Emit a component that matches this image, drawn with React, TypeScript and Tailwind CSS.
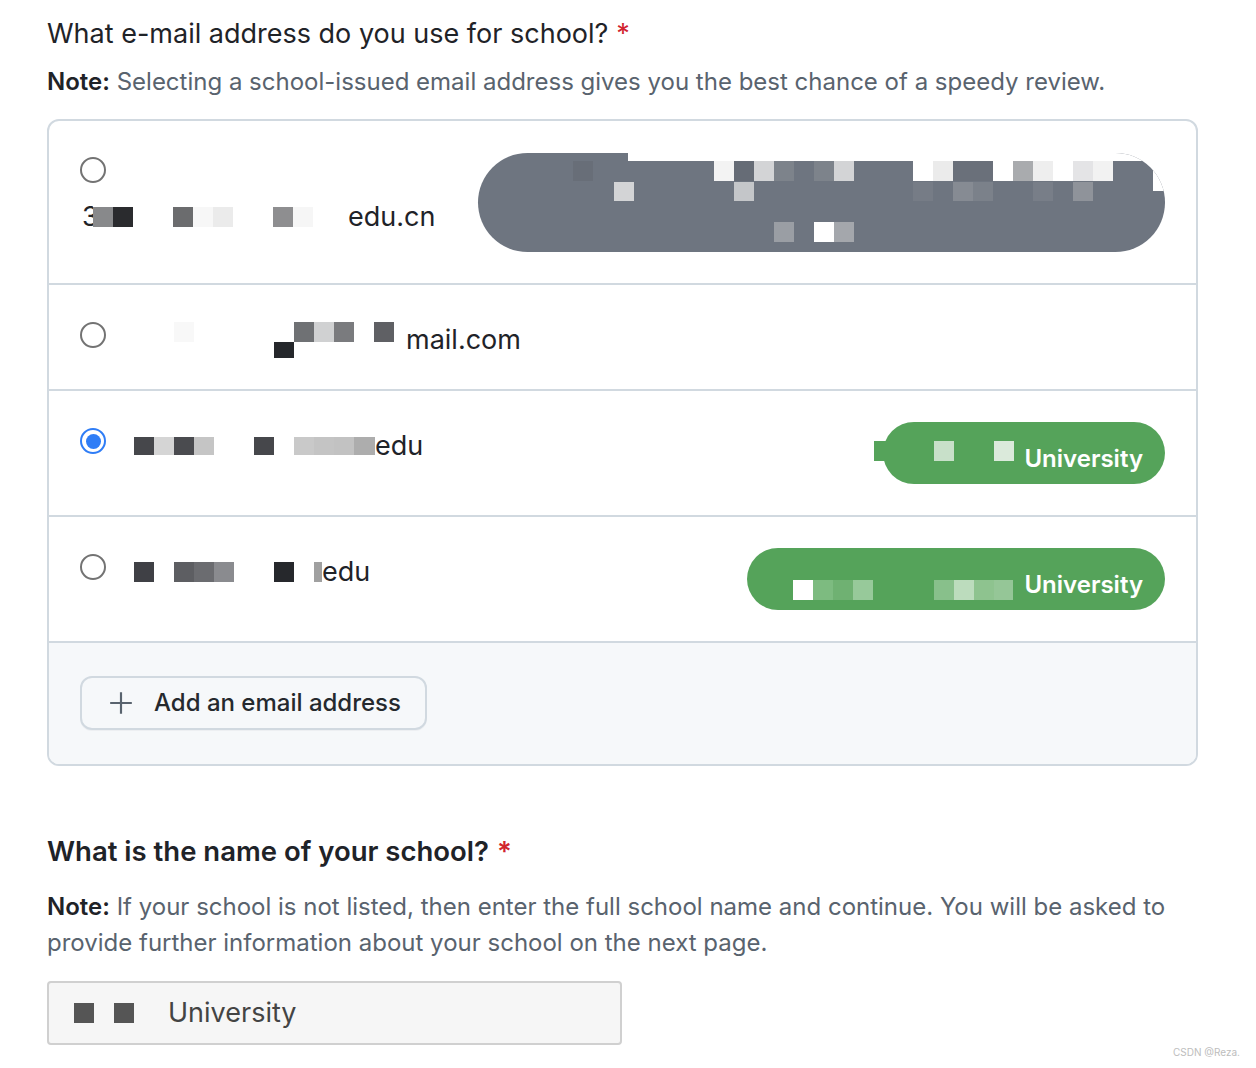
import React from 'react';

type Block = [number, number, number, number, string];

// Pixelated cover over private parts of an address
function Mosaic({ width, height, blocks, className }: { width: number; height: number; blocks: Block[]; className?: string }) {
  return (
    <svg width={width} height={height} viewBox={`0 0 ${width} ${height}`} className={className}>
      {blocks.map(([x, y, w, h, fill], i) => (
        <rect key={i} x={x} y={y} width={w} height={h} fill={fill} />
      ))}
    </svg>
  );
}

function Radio({ checked }: { checked?: boolean }) {
  if (checked) {
    return (
      <div className="w-[26px] h-[26px] shrink-0 rounded-full border-[2.5px] border-[#2f7df6] flex items-center justify-center">
        <div className="w-[15px] h-[15px] rounded-full bg-[#2f7df6]" />
      </div>
    );
  }
  return <div className="w-[26px] h-[26px] shrink-0 rounded-full border-2 border-[#737373] bg-white" />;
}

function Required() {
  return <span className="text-[#d1242f] ml-[8px]">*</span>;
}

export default function App() {
  return (
    <div className="w-[1256px] h-[1068px] bg-white relative overflow-hidden font-['Inter','Noto_Sans',sans-serif] text-[#1f2328]">
      <div className="pl-[47px] pr-[58px] pt-[16px]">
        {/* Email question */}
        <h2 className="text-[27px] leading-[36px] font-normal">
          What e-mail address do you use for school?
          <Required />
        </h2>
        <p className="mt-[12px] text-[24px] leading-[36px] text-[#59636e]">
          <span className="font-semibold text-[#1f2328]">Note:</span> Selecting a school-issued email address gives you the best chance of a speedy review.
        </p>

        <div className="mt-[19px] border-2 border-[#d1d9e0] rounded-[12px] overflow-hidden">
          {/* Option 1 */}
          <div className="h-[162px] flex items-center justify-between pl-[31px] pr-[31px]">
            <div className="flex flex-col self-start pt-[36px]">
              <Radio />
              <div className="flex items-center mt-[17px] h-[34px] text-[27px]">
                <span className="inline-block w-[11px] ml-[2px] overflow-hidden">3</span>
                <Mosaic
                  width={255}
                  height={20}
                  blocks={[
                    [0, 0, 20, 20, '#88898b'],
                    [20, 0, 20, 20, '#2a2b2e'],
                    [80, 0, 20, 20, '#6b6c6e'],
                    [100, 0, 20, 20, '#f7f7f7'],
                    [120, 0, 20, 20, '#ebebeb'],
                    [180, 0, 20, 20, '#8e8e90'],
                    [200, 0, 20, 20, '#f6f6f6'],
                  ]}
                />
                <span>edu.cn</span>
              </div>
            </div>
            <div className="relative w-[687px] h-[99px] rounded-full bg-[#6e7580] overflow-hidden">
              <Mosaic
                width={687}
                height={99}
                className="absolute inset-0"
                blocks={[
                  [150, 0, 537, 8, '#ffffff'],
                  [675, 0, 12, 38, '#ffffff'],
                  [95, 8, 20, 20, '#686e78'],
                  [236, 8, 20, 20, '#f3f3f3'],
                  [256, 8, 20, 20, '#666c76'],
                  [276, 8, 20, 20, '#d3d4d6'],
                  [296, 8, 20, 20, '#7d838b'],
                  [336, 8, 20, 20, '#7d838b'],
                  [356, 8, 20, 20, '#d3d4d6'],
                  [435, 8, 20, 20, '#ffffff'],
                  [455, 8, 20, 20, '#ebebeb'],
                  [475, 8, 40, 20, '#6a707a'],
                  [515, 8, 20, 20, '#ffffff'],
                  [535, 8, 20, 20, '#a9abae'],
                  [555, 8, 20, 20, '#eeeeee'],
                  [575, 8, 20, 20, '#ffffff'],
                  [595, 8, 20, 20, '#e4e4e6'],
                  [615, 8, 20, 20, '#f2f2f2'],
                  [136, 29, 20, 19, '#d3d4d6'],
                  [256, 29, 20, 19, '#c4c6c9'],
                  [435, 29, 20, 19, '#767c86'],
                  [475, 29, 20, 19, '#868b93'],
                  [495, 29, 20, 19, '#7b818a'],
                  [555, 29, 20, 19, '#787e88'],
                  [595, 29, 20, 19, '#8f939a'],
                  [296, 69, 20, 20, '#9a9ea4'],
                  [336, 69, 20, 20, '#ffffff'],
                  [356, 69, 20, 20, '#a4a7ac'],
                ]}
              />
            </div>
          </div>

          {/* Option 2 */}
          <div className="h-[106px] border-t-2 border-[#d1d9e0] flex items-start pl-[31px] pr-[31px] pt-[37px]">
            <Radio />
            <div className="ml-[28px] flex items-start text-[27px]">
              <Mosaic
                width={272}
                height={36}
                blocks={[
                  [40, 0, 20, 20, '#f8f8f8'],
                  [160, 0, 20, 20, '#6f7174'],
                  [180, 0, 20, 20, '#d0d1d2'],
                  [200, 0, 20, 20, '#7a7b7e'],
                  [240, 0, 20, 20, '#5f6064'],
                  [140, 20, 20, 16, '#25272b'],
                ]}
              />
              <span className="leading-[34px] mt-[1px]">mail.com</span>
            </div>
          </div>

          {/* Option 3, selected */}
          <div className="h-[126px] border-t-2 border-[#d1d9e0] flex items-center justify-between pl-[31px] pr-[31px]">
            <div className="flex items-start self-start pt-[37px]">
              <Radio checked />
              <div className="ml-[28px] mt-[3px] flex items-center h-[30px] text-[27px]">
                <Mosaic
                  width={241}
                  height={18}
                  blocks={[
                    [0, 0, 20, 18, '#46474b'],
                    [20, 0, 20, 18, '#d5d5d5'],
                    [40, 0, 20, 18, '#4a4b4f'],
                    [60, 0, 20, 18, '#c5c5c5'],
                    [120, 0, 20, 18, '#46474b'],
                    [160, 0, 20, 18, '#c9c9c9'],
                    [180, 0, 20, 18, '#c4c4c4'],
                    [200, 0, 20, 18, '#c2c2c2'],
                    [220, 0, 21, 18, '#adadad'],
                  ]}
                />
                <span>edu</span>
              </div>
            </div>
            <div className="relative w-[282px] h-[62px] rounded-full bg-[#55a35a] flex items-center justify-end pr-[22px] pt-[12px]">
              <Mosaic
                width={140}
                height={20}
                className="absolute left-[-9px] top-[19px]"
                blocks={[
                  [0, 0, 20, 20, '#55a35a'],
                  [60, 0, 20, 20, '#c8e0c9'],
                  [120, 0, 20, 20, '#dbeadb'],
                ]}
              />
              <span className="text-white text-[24px] font-semibold">University</span>
            </div>
          </div>

          {/* Option 4 */}
          <div className="h-[126px] border-t-2 border-[#d1d9e0] flex items-center justify-between pl-[31px] pr-[31px]">
            <div className="flex items-start self-start pt-[37px]">
              <Radio />
              <div className="ml-[28px] mt-[3px] flex items-center h-[30px] text-[27px]">
                <Mosaic
                  width={188}
                  height={20}
                  blocks={[
                    [0, 0, 20, 20, '#3f4045'],
                    [40, 0, 20, 20, '#5d5e62'],
                    [60, 0, 20, 20, '#6b6c70'],
                    [80, 0, 20, 20, '#8a8b8f'],
                    [140, 0, 20, 20, '#26282c'],
                    [180, 0, 8, 20, '#a0a0a0'],
                  ]}
                />
                <span>edu</span>
              </div>
            </div>
            <div className="relative w-[418px] h-[62px] rounded-full bg-[#55a35a] flex items-center justify-end pr-[22px] pt-[12px]">
              <Mosaic
                width={266}
                height={20}
                className="absolute left-[46px] top-[32px]"
                blocks={[
                  [0, 0, 20, 20, '#ffffff'],
                  [20, 0, 20, 20, '#7dbb80'],
                  [40, 0, 20, 20, '#6fb172'],
                  [60, 0, 20, 20, '#97c99a'],
                  [141, 0, 20, 20, '#88c08b'],
                  [161, 0, 20, 20, '#bcdcbd'],
                  [181, 0, 20, 20, '#8ec38f'],
                  [201, 0, 19, 20, '#95c697'],
                ]}
              />
              <span className="text-white text-[24px] font-semibold">University</span>
            </div>
          </div>

          {/* Add address */}
          <div className="border-t-2 border-[#d1d9e0] bg-[#f6f8fa] px-[31px] pt-[33px] pb-[34px]">
            <button className="h-[54px] w-[347px] flex items-center gap-[20px] pl-[26px] rounded-[12px] border-2 border-[#d1d9e0] bg-[#f6f8fa] shadow-[0_1px_0_rgba(31,35,40,0.04)]">
              <svg width="26" height="26" viewBox="0 0 24 24" className="text-[#59636e]">
                <path d="M12 2v20M2 12h20" stroke="currentColor" strokeWidth="2" fill="none" />
              </svg>
              <span className="text-[24px] font-medium text-[#25292e]">Add an email address</span>
            </button>
          </div>
        </div>

        {/* School name question */}
        <h2 className="mt-[67px] text-[27.5px] leading-[36px] font-semibold">
          What is the name of your school?
          <Required />
        </h2>
        <p className="mt-[20px] text-[24px] leading-[36px] text-[#59636e]">
          <span className="font-semibold text-[#1f2328]">Note:</span> If your school is not listed, then enter the full school name and continue. You will be asked to provide further information about your school on the next page.
        </p>
        <div className="mt-[20px] w-[575px] h-[64px] border-2 border-[#d0d0d0] rounded-[4px] bg-[#f6f6f6] flex items-center pl-[25px] text-[27px] text-[#444]">
          <Mosaic
            width={94}
            height={20}
            blocks={[
              [0, 0, 20, 20, '#555555'],
              [40, 0, 20, 20, '#555555'],
            ]}
          />
          <span>University</span>
        </div>
      </div>

      <span className="absolute right-[16px] bottom-[8px] text-[10px] text-[#bdbdbd]">CSDN @Reza.</span>
    </div>
  );
}
